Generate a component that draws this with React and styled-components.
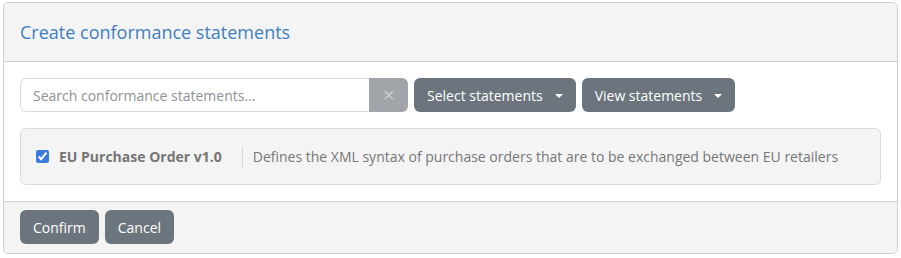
import styled, { createGlobalStyle } from "styled-components";

const GlobalStyle = createGlobalStyle`
  body {
    margin: 0;
    font-family: "Open Sans", "Liberation Sans", sans-serif;
    background: #ffffff;
  }
`;

const Page = styled.div`
  padding: 2px 3px;
`;

const Card = styled.div`
  border: 1px solid #cfcfcf;
  border-radius: 5px;
  overflow: hidden;
`;

const Header = styled.div`
  background: #f4f4f4;
  border-bottom: 1px solid #cfcfcf;
  padding: 0 16px;
  height: 58px;
  display: flex;
  align-items: center;
`;

const Title = styled.h2`
  margin: 0;
  font-size: 18px;
  font-weight: 400;
  color: #3e7fc1;
`;

const Body = styled.div`
  padding: 16px;
  display: flex;
  flex-direction: column;
  gap: 16px;
`;

const Toolbar = styled.div`
  display: flex;
  align-items: center;
  gap: 6px;
`;

const SearchGroup = styled.div`
  display: flex;
  height: 34px;
`;

const SearchInput = styled.input`
  width: 349px;
  box-sizing: border-box;
  border: 1px solid #dcdcdc;
  border-right: none;
  border-radius: 6px 0 0 6px;
  padding: 0 12px;
  font-family: inherit;
  font-size: 14px;
  color: #333;
  outline: none;
  &::placeholder {
    color: #8e9296;
  }
`;

const ClearButton = styled.button`
  width: 39px;
  border: none;
  border-radius: 0 6px 6px 0;
  background: #a1a5a9;
  color: #c9cccf;
  font-size: 16px;
  font-family: inherit;
  display: flex;
  align-items: center;
  justify-content: center;
  padding: 0;
`;

const Button = styled.button`
  height: 34px;
  border: none;
  border-radius: 6px;
  background: #6c757d;
  color: #ffffff;
  font-family: inherit;
  font-size: 14px;
  padding: 0 13px;
  display: flex;
  align-items: center;
  gap: 12px;
`;

const Caret = styled.span`
  width: 0;
  height: 0;
  border-left: 4px solid transparent;
  border-right: 4px solid transparent;
  border-top: 4px solid #ffffff;
  margin-top: 1px;
`;

const Item = styled.div`
  background: #f4f4f4;
  border: 1px solid #dcdcdc;
  border-radius: 6px;
  height: 57px;
  box-sizing: border-box;
  padding: 0 15px;
  display: flex;
  align-items: center;
`;

const Check = styled.input`
  width: 13px;
  height: 13px;
  margin: 0 10px 0 0;
  accent-color: #3b7ddd;
`;

const Name = styled.span`
  font-weight: 700;
  font-size: 14px;
  color: #757575;
  padding-right: 20px;
  border-right: 1px solid #d6d6d6;
  line-height: 20px;
`;

const Description = styled.span`
  font-size: 14px;
  color: #777777;
  padding-left: 10px;
`;

const Footer = styled.div`
  background: #f4f4f4;
  border-top: 1px solid #cfcfcf;
  padding: 8px 16px 9px;
  display: flex;
  gap: 6px;
`;

export default function App() {
  return (
    <Page>
      <GlobalStyle />
      <Card>
        <Header>
          <Title>Create conformance statements</Title>
        </Header>
        <Body>
          <Toolbar>
            <SearchGroup>
              <SearchInput placeholder="Search conformance statements..." />
              <ClearButton disabled>✕</ClearButton>
            </SearchGroup>
            <Button>
              Select statements <Caret />
            </Button>
            <Button>
              View statements <Caret />
            </Button>
          </Toolbar>
          <Item>
            <Check type="checkbox" defaultChecked />
            <Name>EU Purchase Order v1.0</Name>
            <Description>
              Defines the XML syntax of purchase orders that are to be exchanged between EU retailers
            </Description>
          </Item>
        </Body>
        <Footer>
          <Button>Confirm</Button>
          <Button>Cancel</Button>
        </Footer>
      </Card>
    </Page>
  );
}
